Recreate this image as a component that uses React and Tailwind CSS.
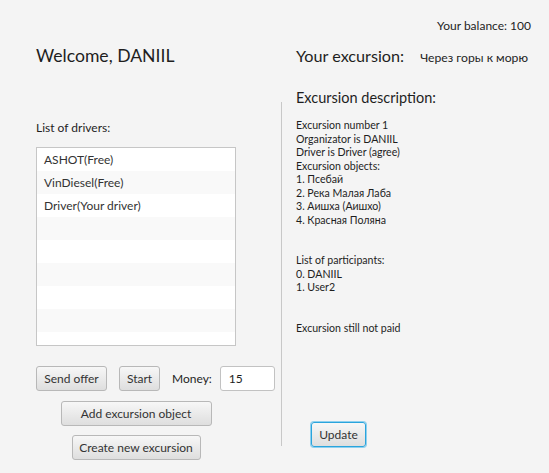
import React from "react";

const drivers = ["ASHOT(Free)", "VinDiesel(Free)", "Driver(Your driver)", "", "", "", "", "", ""];

const description = [
  "Excursion number 1",
  "Organizator is DANIIL",
  "Driver is Driver (agree)",
  "Excursion objects:",
  "1. Псебай",
  "2. Река Малая Лаба",
  "3. Аишха (Аишхо)",
  "4. Красная Поляна",
  "",
  "",
  "List of participants:",
  "0. DANIIL",
  "1. User2",
  "",
  "",
  "Excursion still not paid",
];

const FxButton = ({ children, className = "", focused = false }) => (
  <button
    type="button"
    className={`h-[25px] rounded-[3px] border bg-gradient-to-b from-[#f7f7f7] to-[#dedede] text-[12px] text-[#333] leading-none whitespace-nowrap ${
      focused ? "border-[#2aa4dc] ring-1 ring-[#8fd0ef]" : "border-[#b8b8b8]"
    } ${className}`}
  >
    {children}
  </button>
);

export default function App() {
  return (
    <div
      className="w-[549px] h-[473px] bg-[#f4f4f4] text-[#1e1e1e] overflow-hidden whitespace-nowrap"
      style={{ fontFamily: 'Lato, "Open Sans", sans-serif' }}
    >
      {/* balance */}
      <div className="flex justify-end pr-[18px] pt-[18px] text-[12px] leading-[16px]">
        Your balance: 100
      </div>

      {/* header */}
      <div className="flex items-baseline mt-[10px] h-[24px]">
        <div className="w-[296px] pl-[36px] text-[17.6px] leading-[24px]">Welcome, DANIIL</div>
        <div className="text-[16.2px] leading-[24px]">Your excursion:</div>
        <div className="ml-[16px] text-[12.2px]">Через горы к морю</div>
      </div>

      {/* body */}
      <div className="flex mt-[19px]">
        {/* left column */}
        <div className="w-[281px] pl-[36px] pt-[33px]">
          <div className="text-[12px] leading-[16px]">List of drivers:</div>
          <div className="mt-[11px] w-[200px] h-[199px] border border-[#c6c6c6] bg-white overflow-hidden">
            {drivers.map((d, i) => (
              <div
                key={i}
                className={`h-[23px] pl-[7px] flex items-center text-[12px] text-[#333] ${
                  i % 2 === 1 ? "bg-[#f9f9f9]" : "bg-white"
                }`}
              >
                {d}
              </div>
            ))}
          </div>

          <div className="flex items-center mt-[20px] w-max">
            <FxButton className="w-[71px]">Send offer</FxButton>
            <FxButton className="w-[41px] ml-[12px]">Start</FxButton>
            <span className="ml-[12px] text-[12px]">Money:</span>
            <div className="ml-[8px] w-[55px] h-[25px] rounded-[3px] border border-[#c2c2c2] bg-white text-[12px] flex items-center pl-[8px]">
              15
            </div>
          </div>

          <div className="w-[200px] flex flex-col items-center">
            <FxButton className="w-[151px] mt-[10px]">Add excursion object</FxButton>
            <FxButton className="w-[129px] mt-[9px]">Create new excursion</FxButton>
          </div>
        </div>

        {/* separator */}
        <div className="w-px h-[344px] bg-[#c8c8c8] mt-[15px] shrink-0" />

        {/* right column */}
        <div className="pl-[14px] flex flex-col items-start">
          <div className="text-[14.5px] leading-[22px]">Excursion description:</div>
          <div className="mt-[10px] text-[10.6px] leading-[13.5px]">
            {description.map((l, i) => (
              <div key={i} className="h-[13.5px]">
                {l}
              </div>
            ))}
          </div>
          <FxButton focused className="w-[55px] ml-[15px] mt-[87px]">
            Update
          </FxButton>
        </div>
      </div>
    </div>
  );
}
